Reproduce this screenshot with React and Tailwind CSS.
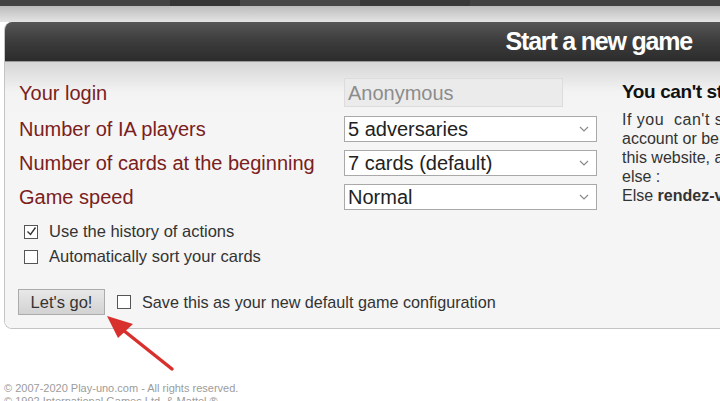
import React from "react";

const font = { fontFamily: '"Liberation Sans", Arial, sans-serif' };

const Chevron = () => (
    <svg width="10" height="6" viewBox="0 0 10 6" className="shrink-0">
        <path d="M1 1l4 4 4-4" fill="none" stroke="#8a8a8a" strokeWidth="1.2" />
    </svg>
);

const Box = ({ checked }) => (
    <span className="w-[14px] h-[14px] shrink-0 border border-[#555] bg-white flex items-center justify-center">
        {checked && (
            <svg width="11" height="11" viewBox="0 0 11 11">
                <path d="M1.5 5.5l3 3 5-7" fill="none" stroke="#333" strokeWidth="1.4" />
            </svg>
        )}
    </span>
);

const Select = ({ value }) => (
    <div className="h-[26px] w-[253px] border border-[#a9a9a9] bg-white flex items-center justify-between pl-[3px] pr-[7px] text-[20px] text-[#222]">
        <span className="leading-none">{value}</span>
        <Chevron />
    </div>
);

const labels = ["Your login", "Number of IA players", "Number of cards at the beginning", "Game speed"];

const App = () => {
    return (
        <div className="relative w-[720px] h-[401px] overflow-hidden bg-white" style={font}>
            {/* ===== TOP STRIP ===== */}
            <div className="h-[6px] flex bg-[#3e3e3e]">
                <div className="w-[170px] bg-[#444]" />
                <div className="w-[70px] bg-[#353535]" />
                <div className="w-[120px] bg-[#474747]" />
                <div className="w-[110px] bg-[#3a3a3a]" />
                <div className="flex-1 bg-[#424242]" />
            </div>
            <div className="h-[16px] bg-gradient-to-b from-[#bcbcbc] to-[#e4e4e4]" />

            {/* ===== PANEL ===== */}
            <div className="ml-[4px] w-[740px] rounded-tl-[8px] rounded-bl-[8px] border-l border-b border-[#c4c4c4] overflow-hidden">
                <div className="h-[40px] bg-gradient-to-b from-[#565656] via-[#3c3c3c] to-[#2c2c2c] border-b border-[#9a9a9a] flex items-center justify-end pr-[52px]">
                    <h1 className="text-[25px] font-bold tracking-[-1.2px] text-white leading-none">Start a new game</h1>
                </div>

                <div className="bg-gradient-to-b from-[#d6d6d6] via-[#f3f3f3] to-[#f5f5f5] bg-[length:100%_60px] bg-no-repeat bg-[#f5f5f5] pl-[14px] pt-[16px] pb-[13px]">
                    <div className="flex">
                        {/* labels + fields */}
                        <div className="flex">
                            <div className="w-[325px] flex flex-col">
                                {labels.map((l, i) => (
                                    <div
                                        key={l}
                                        className={`flex items-center text-[20px] text-[#7a2020] ${i === 0 ? "h-[29px] mb-[9px]" : "h-[26px] mb-[8px]"}`}
                                    >
                                        {l}
                                    </div>
                                ))}
                            </div>
                            <div className="flex flex-col">
                                <div className="h-[29px] w-[219px] mb-[9px] border border-[#dcdcdc] bg-[#ebebeb] flex items-center pl-[3px] text-[20px] text-[#8c8c8c]">
                                    Anonymous
                                </div>
                                <div className="mb-[8px]">
                                    <Select value="5 adversaries" />
                                </div>
                                <div className="mb-[8px]">
                                    <Select value="7 cards (default)" />
                                </div>
                                <Select value="Normal" />
                            </div>
                        </div>

                        {/* right info */}
                        <div className="ml-[25px] w-[200px]">
                            <div className="h-[29px] flex items-center text-[19px] font-bold tracking-[-0.4px] text-[#111] whitespace-nowrap">
                                You can't start a game
                            </div>
                            <div className="mt-[3px] text-[16px] leading-[19px] text-[#333] whitespace-nowrap">
                                <div className="tracking-[0.5px]">If you &nbsp;can't start a game,</div>
                                <div>account or be sure that you are</div>
                                <div>this website, and not on someone</div>
                                <div>else :</div>
                                <div>
                                    Else <b>rendez-vous</b> on play-uno.com
                                </div>
                            </div>
                        </div>
                    </div>

                    {/* options */}
                    <div className="mt-[1px] ml-[5px] flex flex-col text-[16.5px] text-[#333]">
                        <label className="h-[25px] flex items-center gap-[11px]">
                            <Box checked />
                            Use the history of actions
                        </label>
                        <label className="h-[25px] flex items-center gap-[11px]">
                            <Box />
                            Automatically sort your cards
                        </label>
                    </div>

                    <div className="mt-[20px] flex items-center">
                        <button className="ml-[-1px] h-[26px] w-[87px] border border-[#ababab] bg-gradient-to-b from-[#e8e8e8] to-[#d2d2d2] text-[16.5px] text-[#333] leading-none">
                            Let's go!
                        </button>
                        <span className="ml-[12px]">
                            <Box />
                        </span>
                        <span className="ml-[11px] text-[16.2px] text-[#333]">Save this as your new default game configuration</span>
                    </div>
                </div>
            </div>

            {/* ===== FOOTER ===== */}
            <div className="mt-[53px] pl-[4px] text-[11px] leading-[13px] text-[#9c9c9c]">
                <div>© 2007-2020 Play-uno.com - All rights reserved.</div>
                <div>© 1992 International Games Ltd. & Mattel ®</div>
            </div>

            {/* annotation arrow */}
            <svg className="absolute left-0 top-0 pointer-events-none" width="720" height="401">
                <line x1="172" y1="369" x2="118" y2="326" stroke="#d8302c" strokeWidth="3.5" strokeLinecap="round" />
                <polygon points="107,316 133,324 118,338" fill="#d8302c" />
            </svg>
        </div>
    );
};

export default App;
